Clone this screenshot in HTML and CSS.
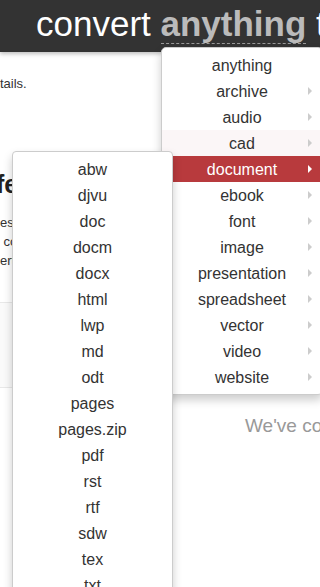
FILE: index.html
```html
<!doctype html>
<html lang="en">
  <head>
    <meta charset="UTF-8" />
    <meta name="viewport" content="width=device-width, initial-scale=1.0" />
    <title>convert anything</title>
    <link rel="stylesheet" href="styles.css">
  </head>
  <body>
    <header class="topbar">
      <h1 class="title">convert <span class="pick">anything</span> to anything</h1>
    </header>

    <div class="page">
      <p class="lead">tails.</p>

      <h2 class="heading">fe</h2>
      <p class="copy">es<br />&nbsp;co<br />ert</p>

      <div class="band"></div>

      <div class="stats">
        <span class="mark"></span>
        <span class="count">We've converted</span>
      </div>
    </div>

    <!-- category menu -->
    <ul class="menu">
      <li>anything</li>
      <li class="sub">archive</li>
      <li class="sub">audio</li>
      <li class="sub hover">cad</li>
      <li class="sub active">document</li>
      <li class="sub">ebook</li>
      <li class="sub">font</li>
      <li class="sub">image</li>
      <li class="sub">presentation</li>
      <li class="sub">spreadsheet</li>
      <li class="sub">vector</li>
      <li class="sub">video</li>
      <li class="sub">website</li>
    </ul>

    <!-- document formats -->
    <ul class="menu formats">
      <li>abw</li>
      <li>djvu</li>
      <li>doc</li>
      <li>docm</li>
      <li>docx</li>
      <li>html</li>
      <li>lwp</li>
      <li>md</li>
      <li>odt</li>
      <li>pages</li>
      <li>pages.zip</li>
      <li>pdf</li>
      <li>rst</li>
      <li>rtf</li>
      <li>sdw</li>
      <li>tex</li>
      <li>txt</li>
      <li>wpd</li>
    </ul>
  </body>
</html>
```

FILE: styles.css
```css
html,
body {
  margin: 0;
  padding: 0;
  height: 100%;
  overflow: hidden;
}
body {
  font-family: "Liberation Sans", Arial, sans-serif;
  background: #fff;
  color: #333;
}
.topbar {
  height: 52px;
  background: #333;
  box-shadow: 0 2px 4px rgba(0, 0, 0, 0.25);
  overflow: hidden;
  position: relative;
  z-index: 1;
}
.title {
  margin: 0;
  padding-left: 36px;
  font-size: 35px;
  font-weight: normal;
  line-height: 48px;
  color: #fff;
  white-space: nowrap;
}
.pick {
  font-weight: bold;
  color: #bbb;
  border-bottom: 1px dashed #999;
}
.page {
  font-size: 13px;
  line-height: 19px;
}
.lead {
  margin: 22px 0 0;
}
.heading {
  margin: 76px 0 0;
  text-indent: -4px;
  font-size: 25px;
  line-height: 30px;
  color: #222;
}
.copy {
  margin: 14px 0 0;
}
.band {
  margin-top: 32px;
  height: 84px;
  background: #fafafa;
  border-top: 1px solid #e8e8e8;
  border-bottom: 1px solid #e8e8e8;
}
.stats {
  display: flex;
  align-items: flex-start;
  margin-top: 22px;
}
.mark {
  width: 3px;
  height: 13px;
  background: #b83a3d;
}
.count {
  margin-left: 245px;
  margin-top: 4px;
  font-size: 19px;
  line-height: 24px;
  color: #999;
  white-space: nowrap;
}
.menu {
  position: absolute;
  left: 161px;
  top: 47px;
  z-index: 2;
  width: 162px;
  box-sizing: border-box;
  margin: 0;
  padding: 4px 0;
  list-style: none;
  background: #fff;
  border: 1px solid #ccc;
  border-radius: 5px;
  box-shadow: 0 5px 10px rgba(0, 0, 0, 0.2);
  font-size: 16px;
}
.menu li {
  position: relative;
  box-sizing: border-box;
  height: 26px;
  padding-top: 1px;
  line-height: 26px;
  text-align: center;
  color: #333;
}
.menu .sub::after {
  content: "";
  position: absolute;
  right: 10px;
  top: 9px;
  border-style: solid;
  border-width: 4px 0 4px 4px;
  border-color: transparent transparent transparent #ccc;
}
.menu .hover {
  background: #fbf6f7;
}
.menu .active {
  background: #b83a3d;
  color: #fff;
}
.menu .active::after {
  border-left-color: #fff;
}
.formats {
  left: 12px;
  top: 151px;
  z-index: 3;
  width: 161px;
  border-radius: 4px;
}
```
